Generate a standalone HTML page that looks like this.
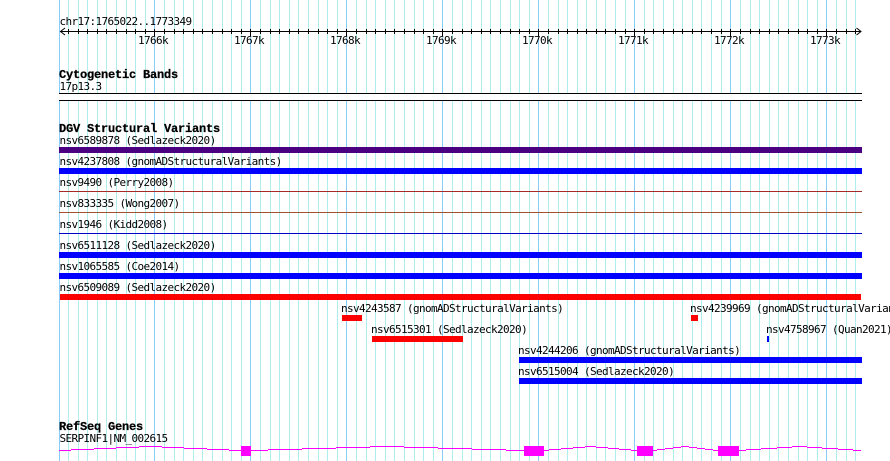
<!DOCTYPE html>
<html>
<head>
<meta charset="utf-8">
<title>JBrowse</title>
<style>
html,body{margin:0;padding:0;background:#fff;width:890px;height:461px;overflow:hidden}
svg{display:block}
text{font-family:"DejaVu Sans Mono","Liberation Mono",monospace;font-size:11px;letter-spacing:-.62px;fill:#000}
text.b{font-family:"Liberation Mono",monospace;font-weight:bold;font-size:12px;letter-spacing:-.2px;stroke:#000;stroke-width:.25px}
rect{shape-rendering:crispEdges}
path{shape-rendering:crispEdges;fill:none}
</style>
</head>
<body>
<svg width="890" height="461" viewBox="0 0 890 461" xmlns="http://www.w3.org/2000/svg">
<path stroke="#afeeee" d="M68.5 0V461M78.5 0V461M87.5 0V461M97.5 0V461M106.5 0V461M116.5 0V461M126.5 0V461M135.5 0V461M145.5 0V461M164.5 0V461M174.5 0V461M183.5 0V461M193.5 0V461M202.5 0V461M212.5 0V461M222.5 0V461M231.5 0V461M241.5 0V461M260.5 0V461M270.5 0V461M279.5 0V461M289.5 0V461M298.5 0V461M308.5 0V461M318.5 0V461M327.5 0V461M337.5 0V461M356.5 0V461M366.5 0V461M375.5 0V461M385.5 0V461M394.5 0V461M404.5 0V461M414.5 0V461M423.5 0V461M433.5 0V461M452.5 0V461M462.5 0V461M471.5 0V461M481.5 0V461M490.5 0V461M500.5 0V461M510.5 0V461M519.5 0V461M529.5 0V461M548.5 0V461M558.5 0V461M567.5 0V461M577.5 0V461M586.5 0V461M596.5 0V461M605.5 0V461M615.5 0V461M625.5 0V461M644.5 0V461M653.5 0V461M663.5 0V461M673.5 0V461M682.5 0V461M692.5 0V461M701.5 0V461M711.5 0V461M721.5 0V461M740.5 0V461M750.5 0V461M759.5 0V461M769.5 0V461M778.5 0V461M788.5 0V461M798.5 0V461M807.5 0V461M817.5 0V461M836.5 0V461M846.5 0V461M855.5 0V461"/>
<path stroke="#87cefa" d="M59.5 0V461M154.5 0V461M250.5 0V461M346.5 0V461M442.5 0V461M538.5 0V461M634.5 0V461M730.5 0V461M826.5 0V461"/>

<!-- ruler -->
<text x="59.5" y="25">chr17:1765022..1773349</text>
<path stroke="#000" d="M60 31.5H861M68.5 29V34M78.5 29V34M87.5 29V34M97.5 29V34M106.5 29V34M116.5 29V34M126.5 29V34M135.5 29V34M145.5 29V34M154.5 29V36M164.5 29V34M174.5 29V34M183.5 29V34M193.5 29V34M202.5 29V34M212.5 29V34M222.5 29V34M231.5 29V34M241.5 29V34M250.5 29V36M260.5 29V34M270.5 29V34M279.5 29V34M289.5 29V34M298.5 29V34M308.5 29V34M318.5 29V34M327.5 29V34M337.5 29V34M346.5 29V36M356.5 29V34M366.5 29V34M375.5 29V34M385.5 29V34M394.5 29V34M404.5 29V34M414.5 29V34M423.5 29V34M433.5 29V34M442.5 29V36M452.5 29V34M462.5 29V34M471.5 29V34M481.5 29V34M490.5 29V34M500.5 29V34M510.5 29V34M519.5 29V34M529.5 29V34M538.5 29V36M548.5 29V34M558.5 29V34M567.5 29V34M577.5 29V34M586.5 29V34M596.5 29V34M605.5 29V34M615.5 29V34M625.5 29V34M634.5 29V36M644.5 29V34M653.5 29V34M663.5 29V34M673.5 29V34M682.5 29V34M692.5 29V34M701.5 29V34M711.5 29V34M721.5 29V34M730.5 29V36M740.5 29V34M750.5 29V34M759.5 29V34M769.5 29V34M778.5 29V34M788.5 29V34M798.5 29V34M807.5 29V34M817.5 29V34M826.5 29V36M836.5 29V34M846.5 29V34M855.5 29V34"/>
<path stroke="#000" style="shape-rendering:auto" d="M65 28L60.5 31.5L65 35M856.5 28L861 31.5L856.5 35"/>
<text x="138" y="44">1766k</text>
<text x="234" y="44">1767k</text>
<text x="330" y="44">1768k</text>
<text x="426" y="44">1769k</text>
<text x="522" y="44">1770k</text>
<text x="618" y="44">1771k</text>
<text x="714" y="44">1772k</text>
<text x="810" y="44">1773k</text>

<!-- cytogenetic bands -->
<text class="b" x="59" y="78">Cytogenetic Bands</text>
<text x="59.5" y="90">17p13.3</text>
<rect x="59" y="93" width="803" height="8" fill="#fff"/>
<rect x="59" y="93" width="803" height="1" fill="#000"/>
<rect x="59" y="100" width="803" height="1" fill="#000"/>

<!-- DGV -->
<text class="b" x="59" y="132">DGV Structural Variants</text>
<text x="59.5" y="144">nsv6589878 (Sedlazeck2020)</text>
<rect x="59" y="147" width="803" height="6" fill="#4b0082"/>
<text x="59.5" y="165">nsv4237808 (gnomADStructuralVariants)</text>
<rect x="59" y="168" width="803" height="6" fill="#0000ff"/>
<text x="59.5" y="186">nsv9490 (Perry2008)</text>
<rect x="59" y="191" width="803" height="1" fill="#a52a2a"/>
<text x="59.5" y="207">nsv833335 (Wong2007)</text>
<rect x="59" y="212" width="803" height="1" fill="#a0522d"/>
<text x="59.5" y="228">nsv1946 (Kidd2008)</text>
<rect x="59" y="233" width="803" height="1" fill="#0000cd"/>
<text x="59.5" y="249">nsv6511128 (Sedlazeck2020)</text>
<rect x="59" y="252" width="803" height="6" fill="#0000ff"/>
<text x="59.5" y="270">nsv1065585 (Coe2014)</text>
<rect x="59" y="273" width="803" height="6" fill="#0000ff"/>
<text x="59.5" y="291">nsv6509089 (Sedlazeck2020)</text>
<rect x="60" y="294" width="801" height="6" fill="#ff0000"/>

<text x="341" y="312">nsv4243587 (gnomADStructuralVariants)</text>
<rect x="342" y="315" width="20" height="6" fill="#ff0000"/>
<text x="690" y="312">nsv4239969 (gnomADStructuralVariants)</text>
<rect x="691" y="315" width="7" height="6" fill="#ff0000"/>
<text x="371" y="333">nsv6515301 (Sedlazeck2020)</text>
<rect x="372" y="336" width="91" height="6" fill="#ff0000"/>
<text x="766" y="333">nsv4758967 (Quan2021)</text>
<rect x="767" y="336" width="2" height="6" fill="#0000ff"/>
<text x="518" y="354">nsv4244206 (gnomADStructuralVariants)</text>
<rect x="519" y="357" width="343" height="6" fill="#0000ff"/>
<text x="518" y="375">nsv6515004 (Sedlazeck2020)</text>
<rect x="519" y="378" width="343" height="6" fill="#0000ff"/>

<!-- RefSeq -->
<text class="b" x="59" y="430">RefSeq Genes</text>
<text x="59.5" y="442">SERPINF1|NM_002615</text>
<path stroke="#ff00ff" d="M59 450.5H71M71 449.5H94M94 448.5H116M116 447.5H139M139 446.5H162M162 447.5H184M184 448.5H207M207 449.5H229M229 450.5H241M251 450.5H268M268 449.5H302M302 448.5H336M336 447.5H370M370 446.5H404M404 447.5H438M438 448.5H472M472 449.5H506M506 450.5H524M544 450.5H549M549 449.5H561M561 448.5H573M573 447.5H585M585 446.5H596M596 447.5H608M608 448.5H619M619 449.5H631M631 450.5H637M653 450.5H657M657 449.5H665M665 448.5H673M673 447.5H681M681 446.5H689M689 447.5H697M697 448.5H705M705 449.5H713M713 450.5H718M739 450.5H746M746 449.5H761M761 448.5H777M777 447.5H792M792 446.5H807M807 447.5H822M822 448.5H838M838 449.5H853M853 450.5H861"/>
<rect x="241" y="446" width="10" height="10" fill="#ff00ff"/>
<rect x="524" y="446" width="20" height="10" fill="#ff00ff"/>
<rect x="637" y="446" width="16" height="10" fill="#ff00ff"/>
<rect x="718" y="446" width="21" height="10" fill="#ff00ff"/>
</svg>
</body>
</html>
